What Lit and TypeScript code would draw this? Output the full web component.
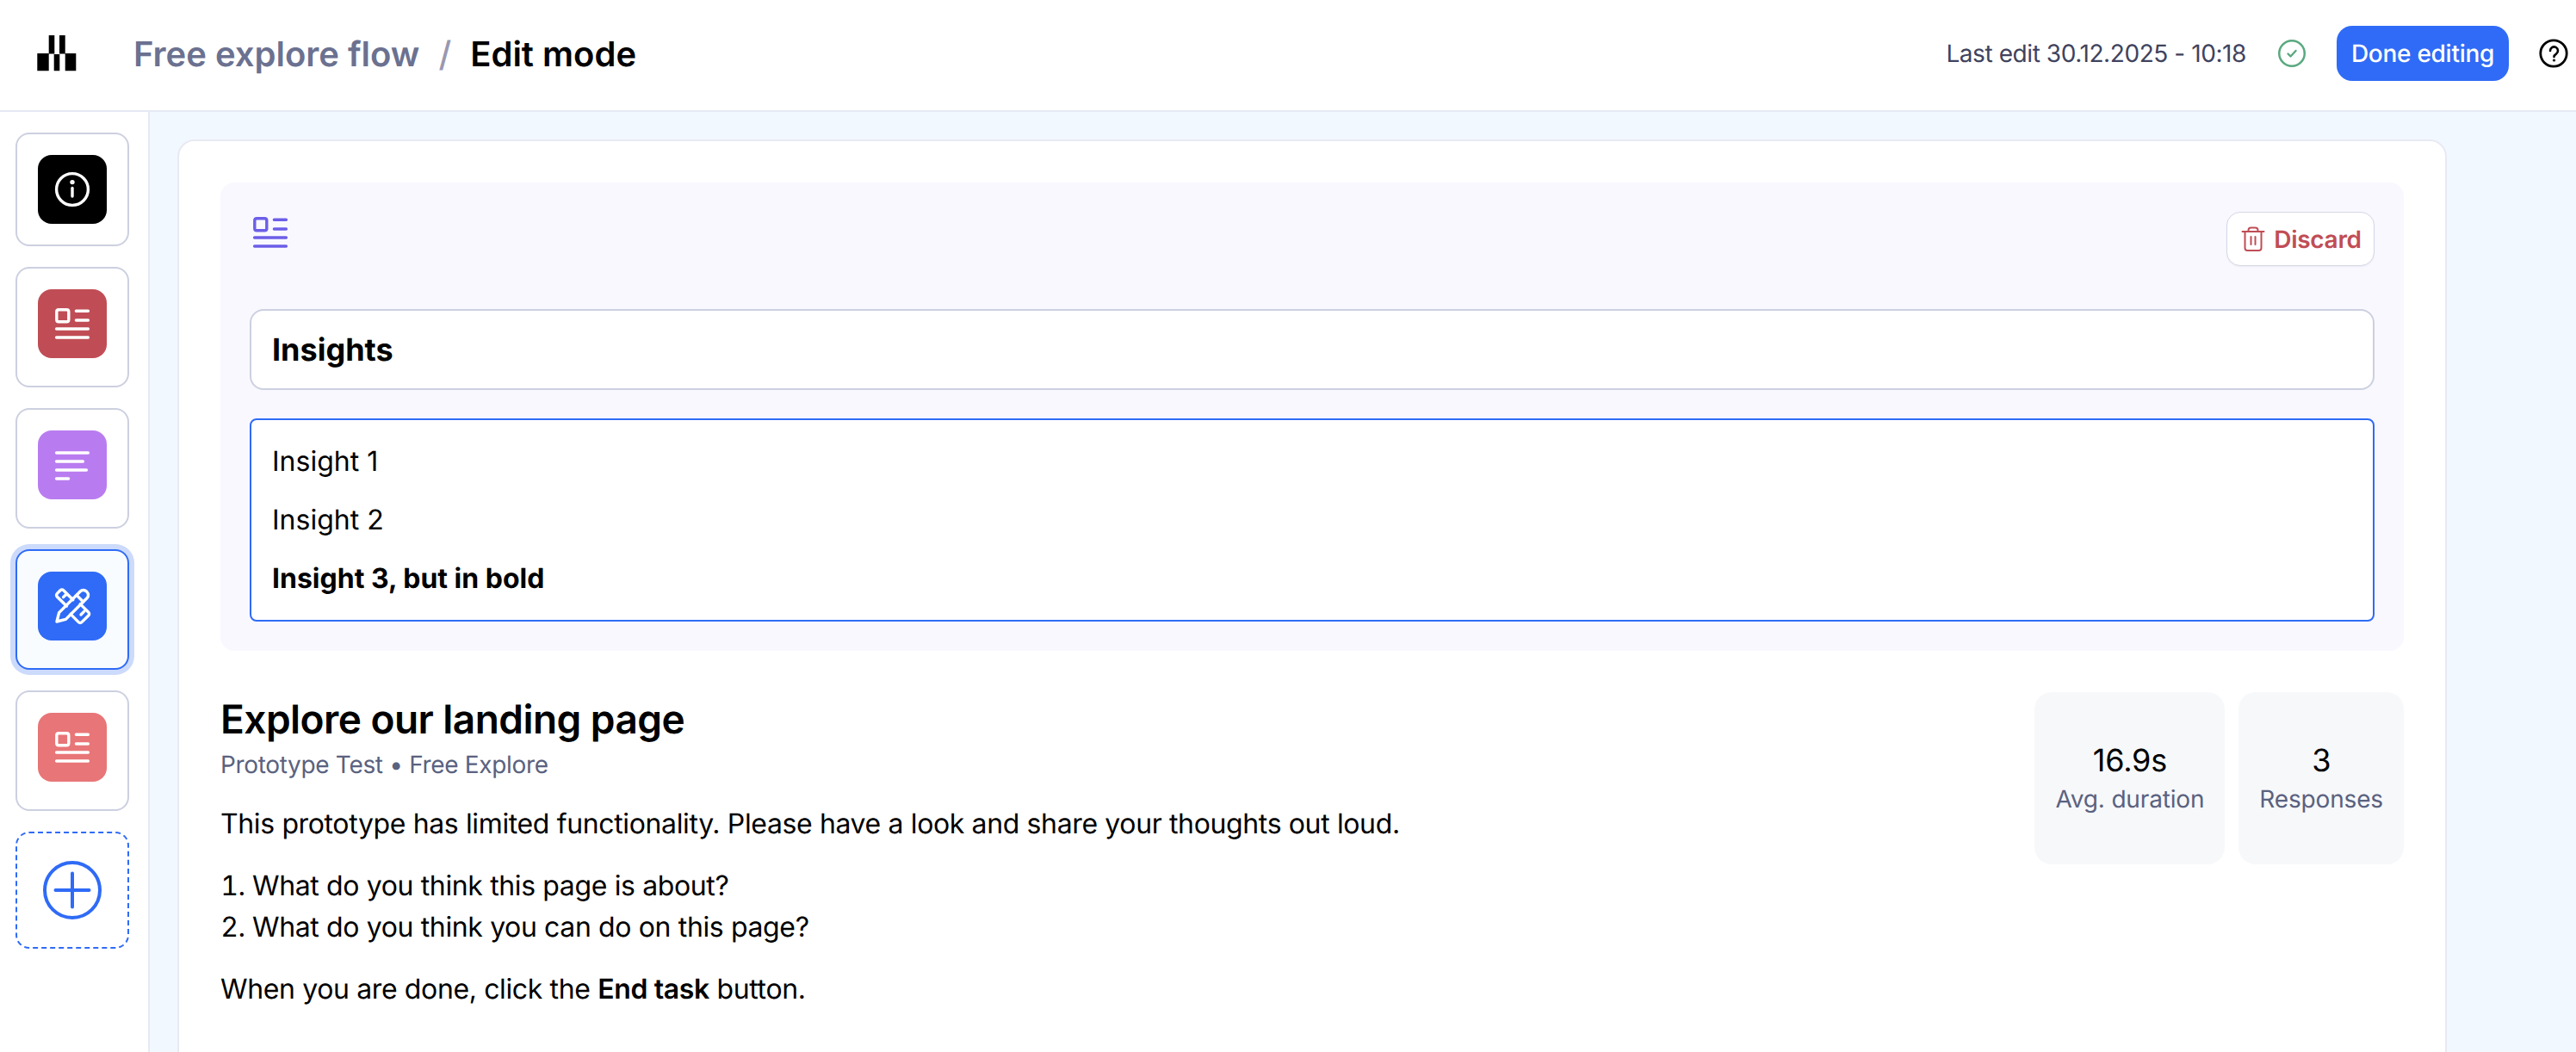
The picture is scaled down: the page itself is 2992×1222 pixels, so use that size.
import { LitElement, css, html, svg } from "lit";
import { customElement } from "lit/decorators.js";

const newsIcon = svg`
  <rect x="2.9" y="3.9" width="7" height="7" rx="1.2" />
  <path d="M14.2 4.6H21.2M14.2 10H21.2M2.8 15H21.2M2.8 20H21.2" />
`;
const textIcon = svg`<path d="M2.8 5H21.2M2.8 10H18.2M2.8 15H20.2M2.8 20H9.8" />`;
const infoIcon = svg`
  <circle cx="12" cy="12" r="9.2" />
  <path d="M12 11.2V16" />
  <circle class="dot" cx="12" cy="7.8" r="0.5" />
`;
const toolsIcon = svg`
  <path d="M3 21l1.3-5.2L16.6 3.5a2.5 2.5 0 0 1 3.6 0l.3.3a2.5 2.5 0 0 1 0 3.6L8.2 19.7 3 21Z" />
  <path d="M14.5 5.7l3.8 3.8" />
  <path d="M8.7 12 3.2 6.6a1.3 1.3 0 0 1 0-1.9L5 2.9a1.3 1.3 0 0 1 1.9 0L12.4 8.4M6.8 6.8 8.6 5" />
  <path d="M16.6 10.8l4.8 4.8a1.3 1.3 0 0 1 0 1.9L17.5 21.3a1.3 1.3 0 0 1-1.9 0L11 16.7M17 17l1.8-1.8" />
`;

const steps = [
  { icon: infoIcon, color: "#000000", first: true },
  { icon: newsIcon, color: "#c04d55" },
  { icon: textIcon, color: "#b97cf0" },
  { icon: toolsIcon, color: "#2f6bf6", active: true },
  { icon: newsIcon, color: "#e87577" },
];

@customElement("app-root")
export class AppRoot extends LitElement {
  static styles = css`
    :host {
      display: block;
      width: 2992px;
      height: 1222px;
      overflow: hidden;
      font-family: Inter, "Liberation Sans", sans-serif;
      text-rendering: geometricPrecision;
      color: #000;
      background: #f2f8ff;
    }

    p, h1, h2, ol { margin: 0; padding: 0; }

    .header {
      box-sizing: border-box;
      height: 130px;
      display: flex;
      align-items: center;
      padding: 0 0 4px 42px;
      background: #fff;
      border-bottom: 2px solid #e6e9f3;
    }

    .logo { width: 48px; height: 44px; flex: none; margin-right: 65px; }

    .crumbs {
      display: flex;
      gap: 22px;
      font-size: 40px;
      font-weight: 600;
    }
    .crumbs .parent { color: #6b7190; }
    .crumbs .sep { color: #9a98b0; font-weight: 500; }

    .right {
      margin-left: auto;
      display: flex;
      align-items: center;
      padding-right: 6px;
    }
    .last-edit { font-size: 28px; color: #40435e; letter-spacing: -0.015em; }
    .check { width: 36px; height: 36px; margin-left: 35px; }
    .done {
      box-sizing: border-box;
      width: 200px;
      height: 64px;
      margin-left: 34px;
      display: flex;
      align-items: center;
      justify-content: center;
      background: #2f6bf6;
      color: #fff;
      border-radius: 18px;
      font-size: 28px;
      font-weight: 500;
      letter-spacing: -0.01em;
    }
    .help { width: 40px; height: 40px; margin-left: 32px; }

    .layout { display: flex; height: 1092px; }

    .sidebar {
      box-sizing: border-box;
      width: 174px;
      flex: none;
      display: flex;
      flex-direction: column;
      gap: 24px;
      padding: 24px 0 0 18px;
      background: #fff;
      border-right: 2px solid #e6e9f3;
    }

    .step {
      box-sizing: border-box;
      width: 132px;
      height: 140px;
      padding: 24px 24px 0;
      background: #fff;
      border: 2px solid #ccd0e0;
      border-radius: 16px;
    }
    .step.first { height: 132px; }
    .step.active {
      background: #f9fcff;
      border-color: #2f6bf6;
      box-shadow: 0 0 0 6px #ccdafb;
    }

    .tile {
      width: 80px;
      height: 80px;
      display: flex;
      align-items: center;
      justify-content: center;
      border-radius: 16px;
    }
    .tile svg { width: 48px; height: 48px; }

    .line-icon {
      fill: none;
      stroke: currentColor;
      stroke-width: 1.7;
      stroke-linecap: round;
      stroke-linejoin: round;
    }
    .line-icon .dot { fill: currentColor; }

    .add {
      box-sizing: border-box;
      width: 132px;
      height: 136px;
      display: flex;
      align-items: center;
      justify-content: center;
      border: 2px dashed #2f6bf6;
      border-radius: 16px;
      color: #2f6bf6;
    }
    .add svg { width: 72px; height: 72px; }

    .main { flex: 1; min-width: 0; padding: 32px 150px 0 32px; }

    .card {
      box-sizing: border-box;
      height: 1200px;
      padding: 48px;
      background: #fff;
      border: 2px solid #e8eaf3;
      border-radius: 20px;
    }

    .panel {
      box-sizing: border-box;
      padding: 34px;
      background: #f9f8ff;
      border-radius: 16px;
    }
    .panel-head {
      display: flex;
      justify-content: space-between;
      align-items: flex-start;
      margin-bottom: 50px;
    }
    .panel-head > svg { width: 48px; height: 48px; color: #6c5ee8; }

    .discard {
      box-sizing: border-box;
      width: 172px;
      height: 63px;
      display: flex;
      align-items: center;
      justify-content: center;
      gap: 8px;
      background: #fff;
      border: 1px solid #d5d7e6;
      border-radius: 16px;
      box-shadow: 0 1px 2px rgba(30, 30, 70, 0.06);
      color: #c04d55;
      font-size: 28px;
      font-weight: 600;
      letter-spacing: -0.01em;
    }
    .discard svg { width: 32px; height: 32px; }

    .title-box {
      box-sizing: border-box;
      height: 94px;
      display: flex;
      align-items: center;
      padding: 0 24px;
      background: #fff;
      border: 2px solid #ccd0e0;
      border-radius: 16px;
      font-size: 36px;
      font-weight: 700;
    }

    .body-box {
      box-sizing: border-box;
      margin-top: 33px;
      padding: 24px;
      background: #fff;
      border: 2px solid #2f6bf6;
      border-radius: 8px;
      font-size: 32px;
      line-height: 48px;
    }
    .body-box p + p { margin-top: 20px; }
    .body-box strong { font-weight: 700; }

    .task { display: flex; justify-content: space-between; margin-top: 48px; }
    .task strong { font-weight: 600; }

    .task h2 { font-size: 46px; font-weight: 600; line-height: 64px; letter-spacing: -0.0118em; }
    .kind { margin-top: 4px; font-size: 28px; line-height: 32px; color: #5a6280; letter-spacing: -0.012em; }
    .copy { margin-top: 29px; font-size: 32px; line-height: 48px; letter-spacing: -0.0115em; }
    .copy ol { list-style: decimal; padding-left: 37px; }
    .copy > * + * { margin-top: 24px; }

    .stats { display: flex; gap: 16px; letter-spacing: -0.01em; }
    .stat {
      box-sizing: border-box;
      height: 200px;
      padding: 3px 24px 0;
      display: flex;
      flex-direction: column;
      align-items: center;
      justify-content: center;
      background: #f7f8fa;
      border-radius: 20px;
    }
    .stat .value { font-size: 36px; line-height: 46px; }
    .stat .label { font-size: 28px; line-height: 45px; color: #5a6280; }
  `;

  private renderSteps() {
    return steps.map(
      (s) => html`
        <div class="step ${s.first ? "first" : ""} ${s.active ? "active" : ""}">
          <div class="tile" style="background:${s.color};color:#fff">
            <svg class="line-icon" viewBox="0 0 24 24">${s.icon}</svg>
          </div>
        </div>
      `,
    );
  }

  render() {
    return html`
      <div class="header">
        <svg class="logo" viewBox="0 0 48 44" fill="#000">
          <path d="M1.3 22h13.4v20.3H1.3ZM14.7 1h6.6v21.5h-6.6ZM20.7 23h6.6v19.3h-6.6ZM27 1h6.7v21.5H27ZM33.7 22h12.6v20.3H33.7Z" />
        </svg>
        <div class="crumbs">
          <span class="parent">Free explore flow</span>
          <span class="sep">/</span>
          <span>Edit mode</span>
        </div>
        <div class="right">
          <span class="last-edit">Last edit 30.12.2025 - 10:18</span>
          <svg class="check line-icon" viewBox="0 0 36 36" style="color:#5aa97f">
            <circle cx="18" cy="18" r="14.75" stroke-width="2.5" />
            <path d="M13.5 18.5l3 3 6-6.5" stroke-width="2.4" />
          </svg>
          <div class="done">Done editing</div>
          <svg class="help line-icon" viewBox="0 0 40 40" style="color:#000">
            <circle cx="20" cy="20" r="15.2" stroke-width="2.8" />
            <path d="M16 17a4.5 4.5 0 1 1 7 3.6c-1.6 1-2.5 1.8-2.5 3.4" stroke-width="2.6" />
            <circle cx="20.5" cy="28" r="0.6" stroke-width="2" />
          </svg>
        </div>
      </div>
      <div class="layout">
        <div class="sidebar">
          ${this.renderSteps()}
          <div class="add">
            <svg class="line-icon" viewBox="0 0 72 72">
              <circle cx="36" cy="36" r="32" stroke-width="4" />
              <path d="M16.5 36H55.5M36 16.5V55.5" stroke-width="4" />
            </svg>
          </div>
        </div>
        <div class="main">
          <div class="card">
            <div class="panel">
              <div class="panel-head">
                <svg class="line-icon" viewBox="0 0 24 24">${newsIcon}</svg>
                <div class="discard">
                  <svg class="line-icon" viewBox="0 0 32 32">
                    <path d="M3.5 7H28.5M6.5 7V26a3 3 0 0 0 3 3h13a3 3 0 0 0 3-3V7M10.5 7V5.5a3 3 0 0 1 3-3h5a3 3 0 0 1 3 3V7M13.5 13V22M18.5 13V22" stroke-width="2" />
                  </svg>
                  Discard
                </div>
              </div>
              <div class="title-box">Insights</div>
              <div class="body-box">
                <p>Insight 1</p>
                <p>Insight 2</p>
                <p><strong>Insight 3, but in bold</strong></p>
              </div>
            </div>
            <div class="task">
              <div>
                <h2>Explore our landing page</h2>
                <p class="kind">Prototype Test • Free Explore</p>
                <div class="copy">
                  <p>This prototype has limited functionality. Please have a look and share your thoughts out loud.</p>
                  <ol>
                    <li>What do you think this page is about?</li>
                    <li>What do you think you can do on this page?</li>
                  </ol>
                  <p>When you are done, click the <strong>End task</strong> button.</p>
                </div>
              </div>
              <div class="stats">
                <div class="stat"><span class="value">16.9s</span><span class="label">Avg. duration</span></div>
                <div class="stat"><span class="value">3</span><span class="label">Responses</span></div>
              </div>
            </div>
          </div>
        </div>
      </div>
    `;
  }
}
